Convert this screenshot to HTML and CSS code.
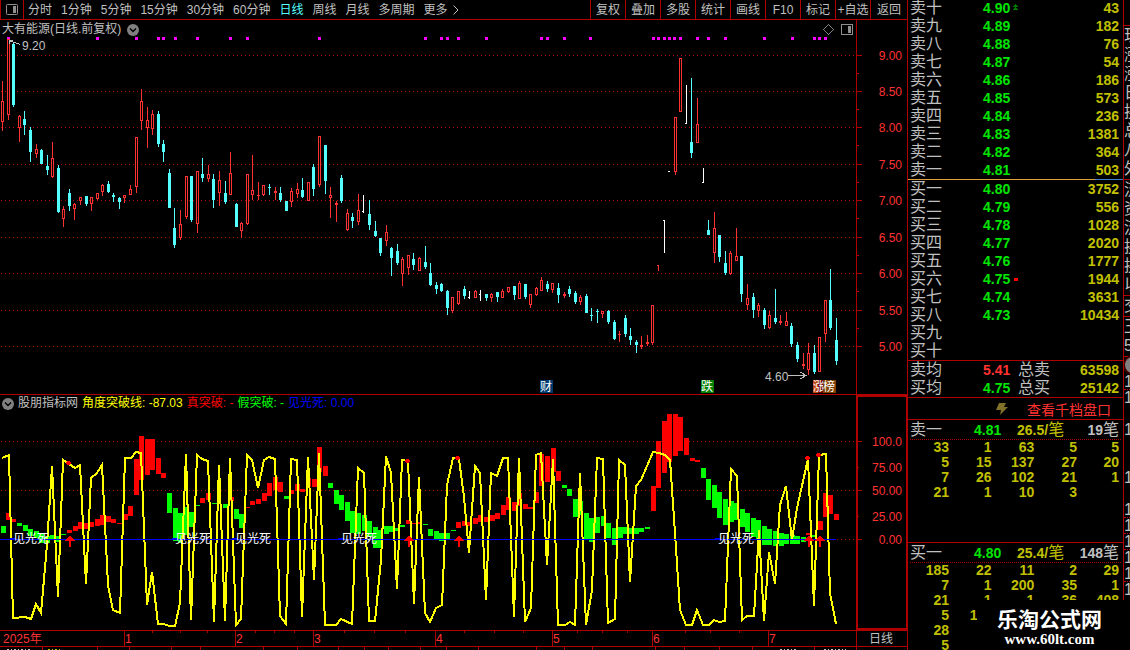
FILE: index.html
```
<!DOCTYPE html>
<html lang="zh-CN">
<head>
    <meta charset="UTF-8">
    <meta name="viewport" content="width=device-width, initial-scale=1.0">
    <title>大有能源 日线</title>
    <link rel="stylesheet" href="styles.css">
</head>
<body>
    <div class="terminal">
        <main class="main">
            <nav class="toolbar">
                <button class="side-toggle" aria-label="侧栏">
                    <svg width="12" height="12" viewBox="0 0 12 12"><rect x="0.5" y="0.5" width="11" height="10" rx="1" fill="none" stroke="#909090"/><rect x="7" y="2" width="3" height="7" fill="#909090"/></svg>
                </button>
                <div class="periods">
                    <button>分时</button>
                    <button>1分钟</button>
                    <button>5分钟</button>
                    <button>15分钟</button>
                    <button>30分钟</button>
                    <button>60分钟</button>
                    <button class="active">日线</button>
                    <button>周线</button>
                    <button>月线</button>
                    <button>多周期</button>
                    <button class="more">更多
                        <svg width="6" height="10" viewBox="0 0 6 10"><path d="M0.5 0.5L5 5L0.5 9.5" fill="none" stroke="#c0c0c0"/></svg>
                    </button>
                </div>
                <div class="tools">
                    <button>复权</button>
                    <button>叠加</button>
                    <button>多股</button>
                    <button>统计</button>
                    <button>画线</button>
                    <button>F10</button>
                    <button>标记</button>
                    <button>+自选</button>
                    <button>返回</button>
                </div>
            </nav>

            <section class="panel price-panel">
                <div class="panel-title">
                    <span>大有能源(日线.前复权)</span>
                    <svg width="12" height="12" viewBox="0 0 12 12"><circle cx="6" cy="6" r="6" fill="#808080"/><path d="M3 4.5L6 7.5L9 4.5" fill="none" stroke="#000" stroke-width="1.5"/></svg>
                </div>
                <svg id="priceChart" class="chart" viewBox="0 0 907 374"></svg>
            </section>

            <section class="panel indicator-panel">
                <div class="panel-title indicator-title">
                    <svg width="12" height="12" viewBox="0 0 12 12"><circle cx="6" cy="6" r="6" fill="#808080"/><path d="M3 4.5L6 7.5L9 4.5" fill="none" stroke="#000" stroke-width="1.5"/></svg>
                    <span>股朋指标网</span>
                    <span class="yellow">角度突破线: -87.03</span>
                    <span class="red">真突破: -</span>
                    <span class="lime">假突破: -</span>
                    <span class="blue">见光死: 0.00</span>
                </div>
                <svg id="indicatorChart" class="chart" viewBox="0 0 907 236"></svg>
            </section>

            <section class="panel">
                <svg id="timeAxis" class="chart" viewBox="0 0 907 20"></svg>
            </section>
        </main>

        <aside class="quote">
            <table class="book">
                <tr><td>卖十</td><td>4.90<svg width="5" height="7" viewBox="0 0 5 7"><path d="M2 0h1v1h1v1h1v1H3v1h1v1h1v1H0V5h1V4h1V3H0V2h1V1h1z" fill="#007800"/></svg></td><td>43</td></tr>
                <tr><td>卖九</td><td>4.89</td><td>182</td></tr>
                <tr><td>卖八</td><td>4.88</td><td>76</td></tr>
                <tr><td>卖七</td><td>4.87</td><td>54</td></tr>
                <tr><td>卖六</td><td>4.86</td><td>186</td></tr>
                <tr><td>卖五</td><td>4.85</td><td>573</td></tr>
                <tr><td>卖四</td><td>4.84</td><td>236</td></tr>
                <tr><td>卖三</td><td>4.83</td><td>1381</td></tr>
                <tr><td>卖二</td><td>4.82</td><td>364</td></tr>
                <tr><td>卖一</td><td>4.81</td><td>503</td></tr>
            </table>
            <div class="ratio"></div>
            <table class="book">
                <tr><td>买一</td><td>4.80</td><td>3752</td></tr>
                <tr><td>买二</td><td>4.79</td><td>556</td></tr>
                <tr><td>买三</td><td>4.78</td><td>1028</td></tr>
                <tr><td>买四</td><td>4.77</td><td>2020</td></tr>
                <tr><td>买五</td><td>4.76</td><td>1777</td></tr>
                <tr><td>买六</td><td>4.75<svg width="5" height="7" viewBox="0 0 5 7"><rect x="1" y="3" width="4" height="3" fill="#f00"/></svg></td><td>1944</td></tr>
                <tr><td>买七</td><td>4.74</td><td>3631</td></tr>
                <tr><td>买八</td><td>4.73</td><td>10434</td></tr>
                <tr><td>买九</td><td></td><td></td></tr>
                <tr><td>买十</td><td></td><td></td></tr>
            </table>
            <table class="book totals">
                <tr><td>卖均</td><td class="up">5.41</td><th>总卖</th><td>63598</td></tr>
                <tr><td>买均</td><td>4.75</td><th>总买</th><td>25142</td></tr>
            </table>
            <div class="depth-link">
                <svg width="12" height="12" viewBox="0 0 12 12"><path d="M3 0H10L8 4H12L4 12L5 7H0Z" fill="#807028"/></svg>
                <a href="#">查看千档盘口</a>
            </div>
            <div class="queue">
                <div class="queue-head">
                    <span>卖一</span><b class="price">4.81</b><span class="avg"><b>26.5/</b>笔</span><span class="count"><b>19</b>笔</span>
                </div>
                <table class="orders">
                    <tr><td>33</td><td>1</td><td>63</td><td>5</td><td>5</td></tr>
                    <tr><td>5</td><td>15</td><td>137</td><td>27</td><td>20</td></tr>
                    <tr><td>7</td><td>26</td><td>102</td><td>21</td><td>1</td></tr>
                    <tr><td>21</td><td>1</td><td>10</td><td>3</td><td></td></tr>
                </table>
            </div>
            <div class="queue">
                <div class="queue-head">
                    <span>买一</span><b class="price">4.80</b><span class="avg"><b>25.4/</b>笔</span><span class="count"><b>148</b>笔</span>
                </div>
                <table class="orders">
                    <tr><td>185</td><td>22</td><td>11</td><td>2</td><td>29</td></tr>
                    <tr><td>7</td><td>1</td><td>200</td><td>35</td><td>1</td></tr>
                    <tr><td>21</td><td>1</td><td>1</td><td>36</td><td>408</td></tr>
                    <tr><td>5</td><td>111</td><td></td><td></td><td></td></tr>
                    <tr><td>28</td><td></td><td></td><td></td><td></td></tr>
                    <tr><td>5</td><td></td><td></td><td></td><td></td></tr>
                </table>
            </div>
        </aside>

        <aside class="info">
            <ul class="group first">
                <li>现</li><li>涨</li><li>涨</li><li>日</li><li>换</li><li>总</li><li>八</li><li>外</li>
            </ul>
            <ul class="group">
                <li>流</li><li>资</li><li>流</li><li>换</li><li>换</li><li>以</li>
            </ul>
            <ul class="group"><li>交</li></ul>
            <ul class="group"><li>王</li><li>5</li></ul>
            <div class="info-tab"></div>
            <ul class="ticks">
                <li class="dot">1</li><li class="tall">1</li><li class="taller">1</li><li class="tall">1</li><li class="dot">1</li><li class="dot">1</li><li class="dot">1</li><li>1</li><li class="dot">1</li><li>1</li>
            </ul>
        </aside>

        <div class="brand">
            <strong>乐淘公式网</strong>
            <span>www.60lt.com</span>
        </div>
    </div>
    <script src="chart.js"></script>
</body>
</html>
```

FILE: styles.css
```
* {
    box-sizing: border-box;
}
body {
    margin: 0;
    background: #000;
    color: #c0c0c0;
    font-family: "Liberation Sans", "Noto Sans CJK SC", sans-serif;
    font-size: 12px;
}
button {
    margin: 0;
    padding: 0;
    border: none;
    background: none;
    color: inherit;
    font: inherit;
    cursor: pointer;
    white-space: nowrap;
}
svg {
    display: block;
}
.terminal {
    display: grid;
    grid-template-columns: minmax(0, 1fr) 217px 6px;
    height: 100vh;
    overflow: hidden;
    position: relative;
}

/* toolbar */
.toolbar {
    display: flex;
    height: 20px;
    border-bottom: 1px solid #b00000;
    line-height: 18px;
}
.side-toggle {
    width: 24px;
    padding: 2px 5px;
    border-left: 1px solid #b00000;
    border-right: 1px solid #b00000;
}
.periods {
    display: flex;
    flex: 1;
    gap: 9px;
    padding-left: 4px;
}
.periods .active {
    color: #54ffff;
}
.more {
    display: flex;
    align-items: center;
    gap: 5px;
}
.tools {
    display: flex;
}
.tools button {
    width: 35px;
    border-left: 1px solid #b00000;
}
.tools button:last-child {
    width: 37px;
}

/* charts */
.panel {
    position: relative;
}
.chart {
    width: 100%;
    height: auto;
}
.panel-title {
    position: absolute;
    top: 1px;
    left: 2px;
    display: flex;
    align-items: center;
    gap: 6px;
    line-height: 17px;
    white-space: pre;
}
.indicator-title {
    gap: 4px;
}
.yellow {
    color: #ffff00;
}
.red {
    color: #ff0000;
}
.lime {
    color: #00ff00;
}
.blue {
    color: #0000ff;
}
.label {
    fill: #c0c0c0;
    font-size: 12px;
}
.axis-text {
    fill: #ff3232;
    font-size: 12px;
}
.signal {
    fill: #fff;
    font-size: 12px;
}

/* order book */
.quote {
    border-left: 1px solid #b00000;
    border-right: 1px solid #b00000;
    overflow: hidden;
}
.quote table {
    width: 100%;
    border-collapse: collapse;
    table-layout: fixed;
}
.quote td, .quote th {
    padding: 0;
    vertical-align: middle;
}
.book {
    margin-top: -1px;
}
.book td, .book th {
    height: 18px;
    font-size: 14px;
    font-weight: bold;
    line-height: 18px;
}
.book td:first-child, .book th {
    width: 75px;
    padding-left: 2px;
    font-size: 16px;
    font-weight: normal;
    text-align: left;
}
.book td:nth-child(2) {
    color: #00e600;
}
.book td:last-child {
    padding-right: 4px;
    color: #c0c000;
    text-align: right;
}
.book td svg {
    display: inline-block;
    margin-left: 3px;
    vertical-align: 2px;
}
.ratio {
    height: 1px;
    background: linear-gradient(to right, #e0a040 87%, #4080d0 87%);
}
.ratio + .book {
    margin-top: 0;
}
.totals {
    margin-top: 0;
    border-top: 1px solid #b00000;
}
.totals td:nth-child(2) {
    width: 33px;
}
.totals td.up {
    color: #ff3232;
}
.totals th {
    width: 40px;
}
.depth-link {
    display: flex;
    align-items: center;
    justify-content: flex-end;
    gap: 19px;
    height: 22px;
    padding-right: 12px;
    border-top: 1px solid #b00000;
    font-size: 14px;
}
.depth-link a {
    color: #ff3232;
    text-decoration: none;
}
.queue {
    min-height: 123px;
    border-top: 1px solid #b00000;
}
.queue-head {
    display: grid;
    grid-template-columns: 64px 43px 1fr auto;
    align-items: center;
    height: 20px;
    margin: 0 2px;
    padding-right: 2px;
    border-bottom: 1px dotted #b00000;
    font-size: 16px;
    line-height: 18px;
}
.queue-head b {
    font-size: 14px;
}
.queue-head .price {
    color: #00e600;
}
.avg {
    color: #c0c000;
}
.orders td {
    height: 15px;
    color: #c0c000;
    font-size: 14px;
    font-weight: bold;
    line-height: 15px;
    text-align: right;
}
.orders td:first-child {
    width: 41px;
}
.orders td:last-child {
    width: 46px;
    padding-right: 4px;
}

/* clipped info column */
.info {
    overflow: hidden;
    font-size: 16px;
}
.info ul {
    width: 30px;
    margin: 0;
    padding: 0;
    list-style: none;
}
.info .group {
    padding-bottom: 1px;
    border-bottom: 1px solid #b00000;
}
.group li {
    height: 19px;
    line-height: 19px;
}
.info .first {
    margin-top: 25px;
    border-top: 1px solid #b00000;
}
.info-tab {
    width: 16px;
    height: 16px;
    margin: 0 0 1px 1px;
    border-radius: 50%;
    background: #808080;
    box-shadow: 0 0 0 2px #400000;
}
.ticks li {
    height: 16px;
    line-height: 16px;
}
.ticks .tall {
    height: 32px;
}
.ticks .taller {
    height: 48px;
}
.ticks .dot {
    border-bottom: 1px dotted #b00000;
}

/* site mark */
.brand {
    position: absolute;
    right: 0;
    bottom: 0;
    display: flex;
    flex-direction: column;
    align-items: center;
    width: 153px;
    height: 50px;
    padding: 6px 8px 0 0;
    background: #000;
    color: #fff;
    line-height: 24px;
}
.brand strong {
    font-family: "Noto Sans CJK SC", sans-serif;
    font-size: 21px;
}
.brand span {
    font-family: "Liberation Serif", serif;
    font-size: 15px;
    font-weight: bold;
    line-height: 18px;
}
```

FILE: chart.js
```
const DARK = '#b00000', RED = '#ff3232', CYAN = '#54ffff';
const FIRST_X = 2.2, STEP = 5.558;

// top of each chart on the shared vertical scale
const PRICE_TOP = 20, IND_TOP = 394;

// high, body top, body bottom, low, type (r = up, c = down, w = flat, x = flat up)
const candles = `81 101 122 131 r|39 39 115 120 r|43 44 105 107 c|115 116 128 142 r|111 119 125 135 c|127 130 152 162 c|144 149 154 158 r|149 150 164 164 c|155 166 170 175 c|142 158 177 178 r
165 168 212 213 c|206 209 219 227 r|189 193 206 211 c|203 204 209 220 r|197 197 201 205 r|196 196 204 206 c|197 197 204 211 r|193 193 199 200 r|184 185 192 196 r|181 184 192 193 c
193 195 197 202 c|197 198 202 209 c|195 195 198 203 r|185 189 195 195 r|137 137 187 193 r|89 101 121 130 r|107 120 128 148 r|110 114 129 135 r|111 114 144 147 c|140 144 152 162 c
169 173 208 208 c|208 228 245 248 c|210 224 238 240 r|176 176 217 219 r|176 176 220 222 c|171 171 224 233 r|158 174 178 182 c|165 174 179 182 r|174 179 200 208 c|171 180 193 206 r
181 193 202 204 c|152 173 195 195 r|203 204 227 227 c|222 223 231 238 r|174 174 224 225 r|155 190 195 200 r|182 195 196 200 r|185 185 195 196 r|184 187 188 195 c|187 191 193 200 r
187 193 200 202 c|201 201 211 211 c|188 191 202 207 r|183 189 194 198 r|178 190 197 198 c|182 182 201 201 r|164 167 189 196 c|136 136 185 187 r|145 145 181 194 c|187 195 198 218 r
201 203 205 222 r|175 178 201 203 c|209 213 230 231 r|213 217 221 228 c|194 210 222 225 r|195 211 212 213 w|200 214 225 230 c|221 231 236 237 c|238 238 253 256 c|225 232 241 246 r
247 248 258 276 c|244 251 263 265 c|257 259 274 286 r|255 255 268 275 r|253 259 265 270 c|257 258 271 271 r|246 262 267 269 c|263 273 285 286 c|282 285 289 294 c|283 284 291 292 c
290 291 308 315 c|297 297 311 313 r|291 291 304 305 r|286 289 296 299 c|291 297 298 299 w|290 291 298 298 r|290 294 295 301 w|294 294 298 301 c|293 294 298 302 r|292 292 297 302 c
289 291 298 298 r|287 287 292 293 r|286 286 295 300 c|281 283 299 299 r|284 284 297 299 c|294 294 305 308 r|287 288 295 296 r|277 280 291 291 r|281 284 289 292 c|283 283 290 293 r
283 288 295 303 c|292 294 296 298 r|286 289 294 297 c|291 293 302 304 c|295 297 302 305 r|294 296 313 313 c|308 315 316 321 c|309 311 312 323 c|311 311 314 318 r|310 311 322 324 c
320 322 339 340 c|331 334 335 342 r|315 318 334 337 c|328 336 340 345 c|340 342 345 353 c|336 345 347 349 r|335 342 344 346 r|305 305 343 345 r|265 265 266 271 x|220 220 221 253 w
171 171 172 172 w|117 117 172 175 r|58 58 112 112 r|85 123 124 124 w|78 142 153 158 c|98 124 143 143 r|168 182 183 183 w|220 230 235 235 c|212 228 253 263 r|235 235 257 262 c
251 263 273 275 c|251 253 274 275 r|228 256 261 261 r|256 256 294 302 c|284 298 305 310 r|293 297 310 318 c|303 305 311 317 r|308 310 325 329 c|311 315 328 329 r|289 318 322 324 c
315 321 323 325 r|312 321 326 326 r|323 326 344 347 c|342 345 359 362 c|353 364 366 369 r|343 353 370 375 r|345 353 372 374 c|337 337 372 372 r|300 300 334 342 r|269 300 328 330 c|318 340 361 365 c`
    .split(/[|\n]/).map(s => s.trim().split(' '));

const dots = [8, 97, 136, 158, 163, 175, 197, 230, 247, 319, 425, 441, 447, 458, 486, 541, 547, 564, 590, 653, 658, 664, 669, 674, 680, 697, 708, 725, 764, 792, 814, 819, 825];

// left, top, bottom, colour
const bars = `1 526 533 g|6 513 520 r|11 519 522 r|17 523 526 g|23 525 531 g|28 529 536 g|34 531 538 g|39 534 543 g|45 536 543 g|50 535 539 g|56 536 542 g|61 534 535 g|67 530 533 r|73 526 531 r|78 522 529 r|84 523 529 r|89 522 527 r|95 519 526 r|100 515 525 r|106 516 522 r|111 519 523 r|117 523 524 r|123 514 520 r|128 506 516 r|134 459 495 r|139 436 480 r|145 439 475 r|150 439 470 r|156 458 474 r|161 473 478 r
167 493 513 g|173 508 541 g|178 513 543 g|184 507 535 g|189 512 527 g|195 505 506 g|200 498 503 r|206 493 500 r|212 503 504 g|223 504 508 g|229 497 501 r|234 509 519 g|239 514 528 g|245 507 508 r|250 501 505 r|256 499 504 r|262 493 501 r|267 483 496 r|273 477 490 r|278 482 492 r|284 496 499 g|289 490 494 r|295 484 491 r|300 489 492 r|306 478 487 r|312 479 487 r|317 447 472 r|323 466 476 r
328 483 488 g|334 490 504 g|339 495 510 g|345 502 521 g|350 511 533 g|356 513 534 g|362 515 531 g|367 521 537 g|373 527 548 g|377 530 548 g|384 526 534 g|389 526 532 g|395 528 531 g|400 525 527 g|406 520 524 r|412 523 524 r|417 522 524 r|423 524 525 g|428 529 536 g|434 531 539 g|439 533 541 g|445 533 539 g|451 530 531 g|456 522 528 r|462 521 526 r|467 522 526 r|473 518 524 r|478 515 522 r|484 517 522 r|490 515 521 r|495 513 519 r
501 505 515 r|506 497 510 r|512 502 511 r|517 493 506 r|523 504 509 r|528 507 509 r|534 492 503 r|539 454 486 r|545 456 482 r|551 448 472 r|556 471 481 r|562 485 488 g|567 489 496 g|573 499 517 g|578 501 515 g|584 513 539 g|589 518 542 g|595 517 533 g|601 516 526 g|606 523 538 g|612 528 545 g|618 527 538 g|623 527 534 g|629 528 534 g|634 528 534 g|639 528 532 g|645 527 529 g
651 486 511 r|656 441 488 r|662 421 473 r|667 414 462 r|673 414 456 r|678 417 451 r|684 438 455 r|690 458 461 r|695 460 462 r|701 468 478 g|706 479 500 g|712 485 508 g|717 492 518 g|723 499 525 g|729 501 522 g|734 503 520 g|740 509 527 g|745 513 532 g|751 518 537 g|756 520 539 g|762 526 545 g|767 529 545 g|773 531 546 g|779 533 546 g|784 534 544 g|790 535 544 g|795 536 544 g|801 537 542 g|806 533 535 r|812 535 537 g|818 521 530 r|823 493 517 r|828 495 514 r|834 514 520 r`
    .split(/[|\n]/).map(s => s.trim().split(' '));

const angleLine = '2,458 9,455 13,618 25,617 31,619 36,604 41,613 47,545 52,466 58,597 63,460 69,464 75,468 80,465 86,584 91,478 97,473 102,465 108,585 113,610 120,613 125,458 131,458 136,452 141,453 147,605 152,572 158,624 164,624 169,626 175,626 180,603 186,454 191,620 197,455 202,459 208,461 214,622 219,465 225,621 230,458 236,625 241,619 247,455 252,460 258,488 264,460 269,457 275,459 280,616 286,624 291,459 297,460 302,617 308,457 314,580 319,453 325,625 336,625 341,619 352,624 358,468 364,473 369,621 375,621 381,560 386,456 391,473 397,589 402,460 408,461 414,604 419,477 425,613 430,622 436,608 442,605 447,485 453,458 459,459 464,497 469,553 475,466 480,473 486,600 491,473 497,476 503,458 508,458 514,617 519,458 525,622 531,608 536,455 541,453 547,565 553,459 558,625 565,625 570,622 575,625 580,473 586,625 592,590 597,458 603,459 608,623 615,619 619,460 625,465 630,582 636,486 641,480 653,452 659,453 665,455 670,460 675,533 680,610 686,625 692,625 697,610 703,625 709,625 714,620 719,622 725,621 731,469 737,476 742,620 747,616 754,616 759,530 764,621 769,552 775,584 780,505 786,486 792,540 797,508 808,459 814,606 819,455 826,454 830,593 836,624';

const rect = (x, y, w, h, fill) => `<rect x="${x}" y="${y}" width="${w}" height="${h}" fill="${fill}"/>`;
const text = (x, y, s, cls, anchor = 'start') => `<text x="${x}" y="${y}" class="${cls}" text-anchor="${anchor}">${s}</text>`;
const grid = (y, x1 = 1, x2 = 856) => `<path d="M${x1} ${y + 0.5}H${x2}" stroke="${DARK}" stroke-dasharray="1 3"/>`;

function drawCandle([high, top, bottom, low, type], i) {
    const x = Math.round(FIRST_X + i * STEP);
    high = +high; top = +top; bottom = +bottom; low = +low;
    if (type === 'w' || type === 'x') {
        const color = type === 'w' ? '#fff' : RED;
        return rect(x, high, 1, low - high, color) + rect(x - 1, top, 2, 1, color);
    }
    const color = type === 'r' ? RED : CYAN;
    let out = rect(x, high, 1, low - high, color) + rect(x - 1, top, 3, bottom - top, color);
    if (type === 'r' && bottom - top > 2) {
        out += rect(x, top + 1, 1, bottom - top - 2, '#000');
    }
    return out;
}

function drawBadge(x, w, color, s) {
    return rect(x, 380, w, 13, color) + text(x, 391, s, 'signal');
}

function drawPriceChart() {
    let out = `<g shape-rendering="crispEdges" transform="translate(0 ${-PRICE_TOP})">`;
    const levels = [55, 91, 127, 164, 200, 237, 273, 310, 346];
    levels.forEach((y, i) => {
        out += grid(y) + rect(857, y, 5, 1, DARK);
        if (i < 8) out += rect(857, y + 18, 2, 1, DARK);
        out += text(902, y + 5, (9 - i * 0.5).toFixed(2), 'axis-text', 'end');
    });
    out += rect(856, 20, 1, 374, DARK);
    dots.forEach(x => out += rect(x - 1, 37, 3, 3, '#ff00ff'));
    candles.forEach((c, i) => out += drawCandle(c, i));

    out += `<path d="M9 40.5L20 44.5M9 40.5L13 40M9 40.5L10 44" stroke="#c0c0c0" fill="none"/>` + text(22, 50, '9.20', 'label');
    out += `<path d="M788 375.5H806M800 372L806 375.5L800 379" stroke="#c0c0c0" fill="none"/>` + text(765, 381, '4.60', 'label');
    out += `<path d="M823.5 29.5L828.5 24.5L833.5 29.5L828.5 34.5Z" stroke="#808080" fill="none"/>`;
    out += `<rect x="841.5" y="24.5" width="11" height="10" rx="1" stroke="#909090" fill="none"/>` + rect(848, 26, 3, 7, '#909090');
    out += drawBadge(540, 13, '#003a70', '财') + drawBadge(701, 13, '#008000', '跌');
    out += rect(818, 380, 5, 13, '#700000') + rect(813, 380, 5, 13, '#c04a10') + text(813, 391, '涨', 'signal');
    out += drawBadge(823, 13, '#804000', '榜') + '</g>';
    document.getElementById('priceChart').innerHTML = out;
}

function drawIndicator() {
    let out = `<g shape-rendering="crispEdges" transform="translate(0 ${-IND_TOP})">`;
    out += rect(0, 394, 907, 1, DARK) + grid(441) + grid(490) + grid(539, 837);
    [[441, '100.0'], [467, '75.00'], [490, '50.00'], [516, '25.00'], [539, '0.00']].forEach(([y, s], i) => {
        out += rect(857, y, i % 2 ? 2 : 5, 1, DARK) + text(902, y + 5, s, 'axis-text', 'end');
    });
    bars.forEach(([x, y1, y2, c]) => out += rect(x, y1, 5, y2 - y1, c === 'r' ? '#ff0000' : '#00ff00'));
    out += `<polyline points="${angleLine}" fill="none" stroke="#ffff00" stroke-width="2"/>`;
    out += rect(0, 539, 836, 1, '#0000ff');
    [13, 175, 235, 341, 718].forEach(x => {
        out += rect(x - 3, 538, 6, 2, '#0000ff') + text(x, 543, '见光死', 'signal');
    });
    [70, 409, 459, 809, 820].forEach(x => {
        out += `<path d="M${x} 535L${x + 5} 541H${x + 1}V547H${x - 1}V541H${x - 5}Z" fill="#ff0000"/>`;
    });
    [[68, 463], [407, 461], [457, 458], [807, 458], [818, 455]].forEach(([x, y]) => {
        out += rect(x - 2, y - 1, 5, 2, '#ff0000') + rect(x - 1, y - 2, 3, 4, '#ff0000');
    });
    out += `<rect x="857" y="396" width="50" height="233" fill="none" stroke="${DARK}" stroke-width="2"/></g>`;
    document.getElementById('indicatorChart').innerHTML = out;
}

function drawTimeAxis() {
    let out = '<g shape-rendering="crispEdges">' + rect(0, 0, 907, 1, DARK) + rect(0, 16, 907, 1, DARK);
    out += text(3, 13, '2025年', 'axis-text');
    [[124, 1], [235, 2], [313, 3], [435, 4], [552, 5], [652, 6], [768, 7]].forEach(([x, m]) => {
        out += rect(x, 1, 1, 15, DARK) + text(x + 1, 13, m, 'axis-text');
    });
    [152, 180, 207, 255, 274, 294, 344, 374, 405, 464, 494, 523, 577, 602, 627, 685, 710, 739].forEach(x => out += rect(x, 1, 1, 2, DARK));
    [42, 97, 129, 171, 200, 263, 297, 338, 364, 388, 420, 446, 478, 536, 564, 592, 655, 684, 719, 752, 814, 856].forEach(x => out += rect(x, 17, 1, 3, DARK));
    out += rect(856, 0, 1, 17, DARK) + text(869, 13, '日线', 'label');
    // tops of the tab row under the axis
    [[7, 23, '#c0c0c0'], [48, 14, '#c0c000'], [780, 16, '#c0c0c0'], [824, 22, '#c0c0c0']].forEach(([x, w, c]) => {
        out += `<path d="M${x} 19.5H${x + w}" stroke="${c}" stroke-dasharray="2 2 1 2"/>`;
    });
    document.getElementById('timeAxis').innerHTML = out + '</g>';
}

drawPriceChart();
drawIndicator();
drawTimeAxis();
```
